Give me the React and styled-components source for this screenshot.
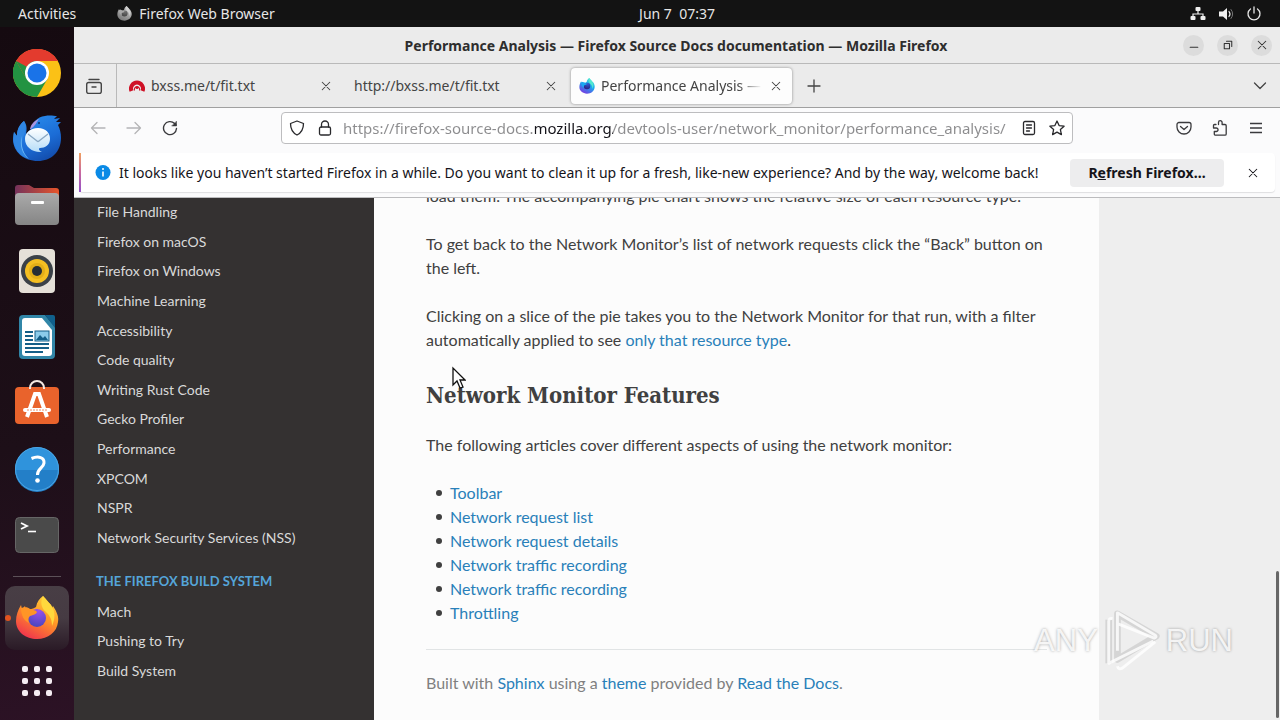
import styled, { createGlobalStyle } from "styled-components";

const GlobalStyle = createGlobalStyle`
  * {
    box-sizing: border-box;
  }

  body {
    margin: 0;
    background: #131313;
    font-family: "Noto Sans", "Open Sans", sans-serif;
    font-size: 14px;
  }

  button {
    padding: 0;
    border: 0;
    background: none;
    color: inherit;
    font: inherit;
  }

  svg {
    display: block;
    flex: none;
  }
`;

const Desktop = styled.div`
  display: flex;
  flex-direction: column;
  height: 100vh;
  overflow: hidden;
  position: relative;
`;

const TopBar = styled.header`
  display: grid;
  grid-template-columns: 1fr auto 1fr;
  align-items: center;
  flex: none;
  height: 27px;
  padding: 0 18px;
  background: #131313;
  color: #e6e6e6;
`;

const TopGroup = styled.div`
  display: flex;
  align-items: center;
  gap: ${({ $gap }) => $gap}px;
  justify-content: ${({ $end }) => ($end ? "flex-end" : "flex-start")};
`;

const Clock = styled.time`
  padding-left: 74px;
`;

const AppMenu = styled.button`
  display: flex;
  align-items: center;
  gap: 7px;
`;

const Workspace = styled.div`
  display: flex;
  flex: 1;
  min-height: 0;
`;

const Dock = styled.nav`
  display: flex;
  flex-direction: column;
  align-items: center;
  flex: none;
  width: 74px;
  padding-top: 13px;
  background: linear-gradient(170deg, #150a10, #1d0f18 60%, #2c1225);
`;

const DockButton = styled.button`
  display: grid;
  place-items: center;
  flex: none;
  width: 64px;
  height: 66px;
`;

const DockDivider = styled.hr`
  width: 48px;
  margin: 8px 0 9px;
  border: 0;
  border-top: 1px solid #5c5158;
`;

const ActiveApp = styled(DockButton)`
  position: relative;
  height: 64px;
  border-radius: 10px;
  background: linear-gradient(#483e45, #463b43 50%, #2a1a26);

  &::before {
    content: "";
    position: absolute;
    left: 0;
    top: 29px;
    width: 6px;
    height: 6px;
    border-radius: 50%;
    background: #e2531f;
  }
`;

const AppsButton = styled(DockButton)`
  height: 62px;
`;

const Window = styled.main`
  display: flex;
  flex-direction: column;
  flex: 1;
  min-width: 0;
  background: #fbfbfc;
`;

const TitleBar = styled.div`
  display: grid;
  grid-template-columns: 89px 1fr 89px;
  align-items: center;
  flex: none;
  height: 37px;
  padding: 0 8px 0 6px;
  border-bottom: 1px solid #b9b9b9;
  background: #ebebeb;
`;

const WindowTitle = styled.h1`
  grid-column: 2;
  margin: 0;
  font-size: 14px;
  font-weight: 700;
  text-align: center;
  white-space: nowrap;
  color: #2e2e2e;
`;

const WindowButtons = styled.div`
  display: flex;
  justify-content: space-between;
`;

const WindowButton = styled.button`
  display: grid;
  place-items: center;
  width: 21px;
  height: 21px;
  border-radius: 50%;
  background: #dcdcdc;
  color: #333;
`;

const TabStrip = styled.div`
  display: flex;
  align-items: center;
  flex: none;
  height: 44px;
  border-bottom: 1px solid #a0a0a0;
  background: #ebebeb;
  color: #444;
`;

const StripButton = styled.button`
  display: grid;
  place-items: center;
  width: 40px;
  height: 43px;
`;

const ViewButton = styled(StripButton)`
  width: 43px;
  margin-right: 2px;
  padding-right: 2px;
  border-right: 1px solid #b9b9b9;
`;

const Tab = styled.div`
  display: flex;
  align-items: center;
  flex: 0 1 221px;
  min-width: 0;
  height: 36px;
  margin: 0 2px;
  padding: 0 10px 0 8px;
  border-radius: 4px;
  background: ${({ $active }) => ($active ? "#fdfdfd" : "transparent")};
  box-shadow: ${({ $active }) => ($active ? "0 0 3px #888" : "none")};
`;

const TabTitle = styled.span`
  flex: 1;
  margin-left: ${({ $icon }) => ($icon ? 6 : 0)}px;
  overflow: hidden;
  white-space: nowrap;
  mask-image: ${({ $fade }) =>
    $fade ? "linear-gradient(to right, #000 85%, transparent)" : "none"};
`;

const TabClose = styled.button`
  display: grid;
  place-items: center;
  width: 12px;
  height: 20px;
  margin-left: 8px;
`;

const Push = styled.div`
  flex: 1;
`;

const NavBar = styled.div`
  display: flex;
  align-items: center;
  flex: none;
  height: 40px;
  padding: 0 6px;
`;

const NavButton = styled.button`
  display: grid;
  place-items: center;
  width: 36px;
  height: 36px;
  color: #3a3a3d;

  &:disabled {
    color: #b4b4b6;
  }
`;

const AddressBar = styled.label`
  display: flex;
  align-items: center;
  flex: 1;
  gap: 12px;
  min-width: 0;
  height: 32px;
  margin: 0 93px;
  padding: 0 7px;
  border: 1px solid #bdbdbf;
  border-radius: 4px;
  background: #fff;
  color: #29292c;
`;

const AddressInput = styled.input`
  flex: 1;
  min-width: 0;
  height: 28px;
  margin-left: -2px;
  padding: 0;
  border: 0;
  outline: 0;
  font: inherit;
  font-size: 15px;
  color: transparent;
  background: linear-gradient(
    to right,
    #8c8c8e 192px,
    #15141a 192px 270px,
    #8c8c8e 270px
  );
  background-clip: text;
`;

const Notice = styled.section`
  display: flex;
  align-items: center;
  flex: none;
  height: 39px;
  margin: 5px;
  padding-right: 16px;
  border-radius: 4px;
  background: #fff;
  box-shadow: 0 1px 1px #dedee0;
  color: #15141a;

  &::before {
    content: "";
    align-self: stretch;
    width: 2px;
    margin-right: 14px;
    background: linear-gradient(#f0a060, #c868a0 50%, #9350c8);
  }
`;

const NoticeText = styled.p`
  flex: 1;
  margin: 0 0 0 8px;
  white-space: nowrap;
`;

const RefreshButton = styled.button`
  width: 154px;
  height: 28px;
  margin-right: 15px;
  border-radius: 4px;
  background: #ededee;
  font-weight: 700;
`;

const Viewport = styled.div`
  display: flex;
  flex: 1;
  min-height: 0;
  overflow: hidden;
  position: relative;
  border-top: 1px solid #bcbcbe;
  background: #eee;
  font-family: Lato, sans-serif;
`;

const SideNav = styled.nav`
  flex: 0 0 300px;
  margin-top: -1px;
  background: #343131;
`;

const SideList = styled.ul`
  display: grid;
  grid-auto-rows: 1fr;
  align-items: center;
  height: ${({ $height }) => $height}px;
  margin: 0;
  padding: 0 23px;
  list-style: none;
`;

const SideLink = styled.a`
  color: #d9d9d9;
  font-size: 14px;
  text-decoration: none;
`;

const SideCaption = styled.h2`
  margin: 0;
  padding: 13px 22px 0;
  color: #55a5d9;
  font-size: 13px;
  line-height: 32px;
  text-transform: uppercase;
`;

const Article = styled.article`
  flex: 0 1 725px;
  padding: 0 52px;
  background: #fcfcfc;
  color: #404040;
  font-size: 16px;
  line-height: 24px;
`;

const Paragraph = styled.p`
  margin: 0 0 24px;
`;

const LeadParagraph = styled(Paragraph)`
  margin-top: -14px;
`;

const Heading = styled.h2`
  margin: 0 0 24px;
  padding-top: 6px;
  font-family: "DejaVu Serif Condensed", "DejaVu Serif", serif;
  font-size: 22px;
  line-height: 27px;
  white-space: nowrap;
`;

const DocLink = styled.a`
  color: #2980b9;
  text-decoration: none;
`;

const BulletList = styled.ul`
  margin: 0 0 24px;
  padding-left: 10px;
  list-style: none;
`;

const BulletItem = styled.li`
  display: flex;
  align-items: center;
  gap: 8px;

  &::before {
    content: "";
    width: 6px;
    height: 6px;
    border-radius: 50%;
    background: #404040;
  }
`;

const Rule = styled.hr`
  margin: 0 0 21px;
  border: 0;
  border-top: 1px solid #e1e4e5;
`;

const Credits = styled.footer`
  color: #808080;
`;

const ScrollThumb = styled.div`
  position: absolute;
  right: 1px;
  bottom: 2px;
  width: 3px;
  height: 147px;
  border-radius: 2px;
  background: #666;
`;

const Pointer = styled.div`
  position: absolute;
  left: 451px;
  top: 366px;
`;

const Watermark = styled.div`
  position: absolute;
  right: 47px;
  bottom: 46px;
  display: flex;
  align-items: center;
  gap: 5px;
  color: rgba(255, 255, 255, 0.85);
  font-family: "Liberation Sans", sans-serif;
  font-size: 31px;
  line-height: 66px;
  text-shadow: 0 0 3px rgba(0, 0, 0, 0.35);
  pointer-events: none;
`;

const Line = ({ size = 16, width = 1.3, children, ...rest }) => (
  <svg
    width={size}
    height={size}
    viewBox="0 0 16 16"
    fill="none"
    stroke="currentColor"
    strokeWidth={width}
    strokeLinecap="round"
    strokeLinejoin="round"
    aria-hidden="true"
    {...rest}
  >
    {children}
  </svg>
);

const CloseIcon = ({ size = 12 }) => (
  <Line size={size} width={1.4}>
    <path d="M3 3l10 10M13 3L3 13" />
  </Line>
);

const ChromeIcon = () => (
  <svg width="48" height="48" viewBox="0 0 48 48">
    <circle cx="24" cy="24" r="24" fill="#fbc116" />
    <path d="M24 24L3.2 12A24 24 0 0 1 44.8 12H24z" fill="#e33b2e" />
    <path d="M3.2 12A24 24 0 0 0 24 48L34.4 30 24 24 13.6 30z" fill="#229342" />
    <path d="M3.2 12L13.6 30 24 24 24 12z" fill="#229342" />
    <path d="M3.2 12A24 24 0 0 1 44.8 12H24a12 12 0 0 0-10.8 7L12 27z" fill="#e33b2e" />
    <path d="M3.2 12L13.6 30 18 20z" fill="#229342" />
    <circle cx="24" cy="24" r="12" fill="#fff" />
    <circle cx="24" cy="24" r="9.5" fill="#1a73e8" />
  </svg>
);

const ThunderbirdIcon = () => (
  <svg width="50" height="50" viewBox="0 0 50 50">
    <defs>
      <linearGradient id="bird" x1="0.2" y1="0" x2="0.7" y2="1">
        <stop offset="0" stopColor="#2b8fee" />
        <stop offset="0.6" stopColor="#1b6cd6" />
        <stop offset="1" stopColor="#134cab" />
      </linearGradient>
      <linearGradient id="letter" x2="0" y2="1">
        <stop offset="0" stopColor="#fff" />
        <stop offset="1" stopColor="#b5dcf8" />
      </linearGradient>
    </defs>
    <path
      d="M19 15c1-6 6-12 14-13 5-1 9 0 12 0l-3 3 6-1-4 4 5 0-3 3c2 4 3 8 3 13 0 14-10 23-23 23C12 47 1 38 1 25l1-7 3 4c0-6 2-11 7-15 3 4 3 8 2 13z"
      fill="url(#bird)"
    />
    <path d="M12 7c-5 4-7 9-7 15l-3-4c-3 13 4 24 15 27C8 37 9 27 12 21c2-5 2-9 0-14z" fill="#2f86e3" />
    <path d="M10 22c-3 9 0 18 7 23-7-7-8-14-7-23z" fill="#6db8f5" />
    <path d="M18 15c1-5 4-8 9-10-3 4-4 7-8 10z" fill="#a995e0" />
    <path
      d="M26 14c8 0 12 5 12 11s-5 9-10 9c-2 0-1 3 2 4-9 1-17-5-17-13 0-6 5-11 13-11z"
      fill="url(#letter)"
    />
    <path d="M16 20l9 7q1 1 2 0l9-7" fill="none" stroke="#8aa7c2" strokeWidth="1.3" />
    <circle cx="27" cy="9" r="1" fill="#0b2f70" />
  </svg>
);

const FilesIcon = () => (
  <svg width="46" height="42" viewBox="0 0 46 42">
    <defs>
      <linearGradient id="folderBack">
        <stop offset="0" stopColor="#74325b" />
        <stop offset="1" stopColor="#e7552b" />
      </linearGradient>
      <linearGradient id="folderFront" x2="0" y2="1">
        <stop offset="0" stopColor="#aaa" />
        <stop offset="1" stopColor="#858585" />
      </linearGradient>
    </defs>
    <path d="M1 4a3 3 0 0 1 3-3h11l5 3h22a3 3 0 0 1 3 3v16H1z" fill="url(#folderBack)" />
    <path
      d="M1 13a4 4 0 0 1 4-4h36a4 4 0 0 1 4 4v24a4 4 0 0 1-4 4H5a4 4 0 0 1-4-4z"
      fill="url(#folderFront)"
    />
    <rect x="17" y="17" width="13" height="3" rx="1" fill="#fff" />
  </svg>
);

const MusicIcon = () => (
  <svg width="38" height="46" viewBox="0 0 38 46">
    <rect x="1" y="1" width="36" height="44" rx="4" fill="#e5e0d8" />
    <circle cx="19" cy="23" r="16" fill="#3b4148" />
    <circle cx="19" cy="23" r="12" fill="#f5bf22" />
    <circle cx="19" cy="23" r="8" fill="#e3ae18" />
    <circle cx="19" cy="23" r="5" fill="#262d35" />
  </svg>
);

const WriterIcon = () => (
  <svg width="38" height="46" viewBox="0 0 38 46">
    <path d="M5 1h22l10 12v28a4 4 0 0 1-4 4H5a4 4 0 0 1-4-4V5a4 4 0 0 1 4-4z" fill="#3186a8" />
    <path d="M27 1h8a2 2 0 0 1 2 2v11z" fill="#10608c" />
    <path d="M7 4h17l10 12v23a3 3 0 0 1-3 3H7a3 3 0 0 1-3-3V7a3 3 0 0 1 3-3z" fill="#fff" />
    <path
      d="M7 18h8M7 22h8M7 26h8M7 30h24M7 34h24M7 38h18"
      stroke="#155f88"
      strokeWidth="1.8"
    />
    <rect x="17" y="17" width="14" height="10" fill="#8ccbea" stroke="#155f88" />
    <path d="M18 26l4-5 3 3 2-2 3 4z" fill="#155f88" />
  </svg>
);

const StoreIcon = () => (
  <svg width="46" height="46" viewBox="0 0 46 46">
    <rect x="1" y="7" width="44" height="37" rx="4" fill="#e9632c" />
    <path d="M16 9V8a7 7 0 0 1 14 0v1" fill="none" stroke="#f4e9e2" strokeWidth="2" />
    <path d="M13 37L21 14h4l8 23" fill="none" stroke="#fff" strokeWidth="4" />
    <rect x="9" y="28" width="28" height="4" rx="2" fill="#fff" />
    <path d="M13 30h20" stroke="#ee8e67" strokeDasharray="2 1" />
  </svg>
);

const HelpIcon = () => (
  <svg width="46" height="46" viewBox="0 0 46 46">
    <circle cx="23" cy="23" r="22" fill="#2f93dc" />
    <path d="M1 24a22 22 0 0 0 44 0z" fill="#237fc8" />
    <circle cx="23" cy="23" r="21.5" fill="none" stroke="#4aa5e4" />
    <path
      d="M17.500 12.500c7-3 13-1 12.500 4.500-.5 5-7 6-6.500 12"
      fill="none"
      stroke="#fff"
      strokeWidth="3"
    />
    <circle cx="23.500" cy="34.500" r="2.300" fill="#fff" />
  </svg>
);

const TerminalIcon = () => (
  <svg width="46" height="38" viewBox="0 0 46 38">
    <rect x="1.5" y="1.5" width="43" height="35" rx="4" fill="#4a4a4a" stroke="#666" />
    <path d="M7 7l6 3-6 3" fill="none" stroke="#fff" strokeWidth="1.8" />
    <path d="M14 15.5h8" stroke="#fff" strokeWidth="1.6" />
  </svg>
);

const FirefoxLogo = ({ size, id, colors, globe }) => (
  <svg width={size} height={size} viewBox="0 0 44 44">
    <defs>
      <linearGradient id={`${id}-body`} x1="0.8" y1="0" x2="0.25" y2="1">
        <stop offset="0" stopColor={colors[0]} />
        <stop offset="0.45" stopColor={colors[1]} />
        <stop offset="1" stopColor={colors[2]} />
      </linearGradient>
      <radialGradient id={`${id}-globe`} cx="0.6" cy="0.1" r="0.9">
        <stop offset="0" stopColor={globe[0]} />
        <stop offset="1" stopColor={globe[1]} />
      </radialGradient>
    </defs>
    <path
      d="M28 0c3 3 5 6 8 9l1 3 1-2c4 6 6 11 5 16-1 10-10 17-21 17S1 36 1 25c0-6 2-11 5-16l1 4 3-3 1 4c4-1 7-1 10-3 1-5 3-8 7-11z"
      fill={`url(#${id}-body)`}
    />
    <circle cx="22" cy="22" r="9" fill={`url(#${id}-globe)`} />
    <path
      d="M6 12c4-1 7-1 9 1 3 1 6 1 7 3-1 3-5 3-7 4-2 2-2 4-1 7-5-2-8-8-8-15z"
      fill={colors[1]}
    />
    <path d="M28 0c3 3 5 6 8 9 5 7 4 14 1 21 0-8-3-11-6-14-5-4-6-10-3-16z" fill={colors[0]} />
  </svg>
);

const GridIcon = () => (
  <svg width="32" height="32" viewBox="0 0 32 32" fill="#f5edf2">
    {[0, 12, 24].map((y) =>
      [0, 12, 24].map((x) => (
        <rect key={`${x}-${y}`} x={x + 1} y={y + 1} width="6" height="6" rx="2" />
      ))
    )}
  </svg>
);

const NetworkIcon = () => (
  <svg width="16" height="16" viewBox="0 0 16 16" fill="#f0f0f0">
    <rect x="5.5" y="1" width="5" height="4" rx="1" />
    <rect x="0.5" y="10" width="5" height="4" rx="1" />
    <rect x="10.5" y="10" width="5" height="4" rx="1" />
    <path d="M8 4v4M3 11V8h10v3" fill="none" stroke="#f0f0f0" strokeWidth="1.2" />
  </svg>
);

const VolumeIcon = () => (
  <svg width="16" height="16" viewBox="0 0 16 16" fill="none" strokeLinecap="round">
    <path d="M1 5.500h4L9 2v12L5 10.500H1z" fill="#f0f0f0" />
    <path d="M11 5.500q2 2.500 0 5" stroke="#f0f0f0" strokeWidth="1.2" />
    <path d="M13 3.500q3.500 4.500 0 9" stroke="#777" />
  </svg>
);

const ShieldIcon = () => (
  <Line>
    <path d="M8 1l6.500 2.500c0 5-1.500 9-6.500 11.500C3 12.500 1.500 8.500 1.500 3.500z" />
  </Line>
);

const LockIcon = () => (
  <Line>
    <rect x="2.500" y="7" width="11" height="8" rx="1.500" />
    <path d="M4.500 7V4.500a3.500 3.500 0 0 1 7 0V7" />
  </Line>
);

const ReaderIcon = () => (
  <Line>
    <rect x="2.500" y="1.500" width="11" height="13" rx="1.500" />
    <path d="M5.500 5h5M5.500 8h5M5.500 11h3" />
  </Line>
);

const StarIcon = () => (
  <Line>
    <path d="M8 1l2.100 4.600 5 .6-3.700 3.400 1 5L8 12.100l-4.400 2.500 1-5L.9 6.200l5-.6z" />
  </Line>
);

const PlayLogo = () => (
  <svg width="58" height="66" viewBox="0 0 58 68" fill="none" strokeLinejoin="round">
    <g stroke="rgba(0,0,0,0.10)" strokeWidth="7">
      <path d="M14 46V6l40 23-40 24z" />
      <path d="M5 57V12" />
    </g>
    <g stroke="rgba(255,255,255,0.8)" strokeWidth="3">
      <path d="M14 44V5l39 23q2 2-1 3L14 16" />
      <path d="M9 11q-4-1-4 3v43l46-23" />
      <path d="M53 35L19 62q-4 2-5-2" />
    </g>
  </svg>
);

const dockApps = [
  { name: "Google Chrome", Icon: ChromeIcon },
  { name: "Thunderbird Mail", Icon: ThunderbirdIcon },
  { name: "Files", Icon: FilesIcon },
  { name: "Rhythmbox", Icon: MusicIcon },
  { name: "LibreOffice Writer", Icon: WriterIcon },
  { name: "Ubuntu Software", Icon: StoreIcon },
  { name: "Help", Icon: HelpIcon },
  { name: "Terminal", Icon: TerminalIcon },
];

const sideLinks = [
  "File Handling",
  "Firefox on macOS",
  "Firefox on Windows",
  "Machine Learning",
  "Accessibility",
  "Code quality",
  "Writing Rust Code",
  "Gecko Profiler",
  "Performance",
  "XPCOM",
  "NSPR",
  "Network Security Services (NSS)",
];

const buildLinks = ["Mach", "Pushing to Try", "Build System"];

const featureLinks = [
  "Toolbar",
  "Network request list",
  "Network request details",
  "Network traffic recording",
  "Network traffic recording",
  "Throttling",
];

const SideMenu = ({ items, height }) => (
  <SideList $height={height}>
    {items.map((item) => (
      <li key={item}>
        <SideLink href="#">{item}</SideLink>
      </li>
    ))}
  </SideList>
);

const App = () => (
  <Desktop>
    <GlobalStyle />
    <TopBar>
      <TopGroup $gap={41}>
        <button>Activities</button>
        <AppMenu>
          <FirefoxLogo
            size={15}
            id="mono"
            colors={["#d0d0d0", "#a8a8a8", "#777"]}
            globe={["#777", "#444"]}
          />
          Firefox Web Browser
        </AppMenu>
      </TopGroup>
      <Clock>Jun 7&nbsp; 07:37</Clock>
      <TopGroup $gap={12} $end>
        <NetworkIcon />
        <VolumeIcon />
        <Line>
          <path d="M8 1v6M4.500 3a6 6 0 1 0 7 0" />
        </Line>
      </TopGroup>
    </TopBar>

    <Workspace>
      <Dock aria-label="Dock">
        {dockApps.map(({ name, Icon }) => (
          <DockButton key={name} aria-label={name}>
            <Icon />
          </DockButton>
        ))}
        <DockDivider />
        <ActiveApp aria-label="Firefox">
          <FirefoxLogo
            size={44}
            id="color"
            colors={["#ffd83d", "#ff9526", "#f0304f"]}
            globe={["#9a50ee", "#4b46bd"]}
          />
        </ActiveApp>
        <AppsButton aria-label="Show applications">
          <GridIcon />
        </AppsButton>
      </Dock>

      <Window>
        <TitleBar>
          <WindowTitle>
            Performance Analysis — Firefox Source Docs documentation — Mozilla Firefox
          </WindowTitle>
          <WindowButtons>
            <WindowButton aria-label="Minimize">
              <Line size={12} width={1.6}>
                <path d="M3 11h10" />
              </Line>
            </WindowButton>
            <WindowButton aria-label="Restore">
              <Line size={12} width={1.4}>
                <path d="M3 6h7v7H3zM6 3h7v7" />
              </Line>
            </WindowButton>
            <WindowButton aria-label="Close">
              <CloseIcon />
            </WindowButton>
          </WindowButtons>
        </TitleBar>

        <TabStrip>
          <ViewButton aria-label="View recent browsing">
            <Line width={1.4}>
              <path d="M3 1.500h10" />
              <rect x="0.700" y="4.500" width="14.600" height="11" rx="2" />
              <path d="M6 9h4" />
            </Line>
          </ViewButton>
          <Tab>
            <svg width="16" height="16" viewBox="0 0 16 16" fill="none">
              <path d="M2.500 13A6 6 0 1 1 13.500 13" stroke="#cf1126" strokeWidth="4" />
              <path d="M5.500 12.500a2.700 2.700 0 1 1 5 0" stroke="#cf1126" strokeWidth="1.200" />
              <circle cx="8" cy="9.500" r="1.500" fill="#cf1126" />
            </svg>
            <TabTitle $icon>bxss.me/t/fit.txt</TabTitle>
            <TabClose aria-label="Close tab">
              <CloseIcon />
            </TabClose>
          </Tab>
          <Tab>
            <TabTitle>http://bxss.me/t/fit.txt</TabTitle>
            <TabClose aria-label="Close tab">
              <CloseIcon />
            </TabClose>
          </Tab>
          <Tab $active>
            <FirefoxLogo
              size={16}
              id="dev"
              colors={["#54e8d0", "#1aa8f0", "#7a35e0"]}
              globe={["#3060d8", "#2a2080"]}
            />
            <TabTitle $icon $fade>
              Performance Analysis — Firefox Source Docs
            </TabTitle>
            <TabClose aria-label="Close tab">
              <CloseIcon />
            </TabClose>
          </Tab>
          <StripButton aria-label="New tab">
            <Line>
              <path d="M8 2v12M2 8h12" />
            </Line>
          </StripButton>
          <Push />
          <StripButton aria-label="List all tabs">
            <Line>
              <path d="M2.500 5l5.500 5.500L13.500 5" />
            </Line>
          </StripButton>
        </TabStrip>

        <NavBar>
          <NavButton disabled aria-label="Back">
            <Line>
              <path d="M15 8H1.500M7 2.500L1.500 8 7 13.500" />
            </Line>
          </NavButton>
          <NavButton disabled aria-label="Forward">
            <Line>
              <path d="M1 8h13.500M9 2.500L14.500 8 9 13.500" />
            </Line>
          </NavButton>
          <NavButton aria-label="Reload">
            <Line width={1.4}>
              <path d="M14.500 8.500A6.500 6.500 0 1 1 12.600 3.500L14 5" />
              <path d="M14.500 1.500V6H10z" fill="currentColor" strokeWidth="0.5" />
            </Line>
          </NavButton>
          <AddressBar>
            <ShieldIcon />
            <LockIcon />
            <AddressInput
              aria-label="Address"
              defaultValue="https://firefox-source-docs.mozilla.org/devtools-user/network_monitor/performance_analysis/"
            />
            <ReaderIcon />
            <StarIcon />
          </AddressBar>
          <NavButton aria-label="Save to Pocket">
            <Line>
              <path d="M3 2.500h10a2 2 0 0 1 2 2V7A7 7 0 0 1 1 7V4.500a2 2 0 0 1 2-2z" />
              <path d="M4.500 6.500L8 9.500l3.500-3" />
            </Line>
          </NavButton>
          <NavButton aria-label="Extensions">
            <Line width={1.3}>
              <path d="M6.500 4.500V2.500a1.800 1.800 0 0 1 3.600 0v2H13a1.200 1.200 0 0 1 1.200 1.200V14a1.200 1.200 0 0 1-1.200 1.200H3.500A1.200 1.200 0 0 1 2.300 14v-2.500h2a1.700 1.700 0 0 0 0-3.500H1.500V5.500a1 1 0 0 1 1-1H4" />
            </Line>
          </NavButton>
          <NavButton aria-label="Menu">
            <Line strokeLinecap="butt">
              <path d="M2 3.500h12M2 8h12M2 12.500h12" />
            </Line>
          </NavButton>
        </NavBar>

        <Notice>
          <svg width="16" height="16" viewBox="0 0 16 16">
            <circle cx="8" cy="7.500" r="7.500" fill="#0a8ae6" />
            <circle cx="8" cy="4" r="1" fill="#fff" />
            <path d="M8 6.500v5" stroke="#fff" strokeWidth="1.600" />
          </svg>
          <NoticeText>
            It looks like you haven’t started Firefox in a while. Do you want to clean it up for a
            fresh, like-new experience? And by the way, welcome back!
          </NoticeText>
          <RefreshButton>
            R<u>e</u>fresh Firefox…
          </RefreshButton>
          <TabClose aria-label="Dismiss">
            <CloseIcon />
          </TabClose>
        </Notice>

        <Viewport>
          <SideNav aria-label="Documentation">
            <SideMenu items={sideLinks} height={355} />
            <SideCaption>The Firefox Build System</SideCaption>
            <SideMenu items={buildLinks} height={88} />
          </SideNav>
          <Article>
            <LeadParagraph>
              load them. The accompanying pie chart shows the relative size of each resource type.
            </LeadParagraph>
            <Paragraph>
              To get back to the Network Monitor’s list of network requests click the “Back” button
              on the left.
            </Paragraph>
            <Paragraph>
              Clicking on a slice of the pie takes you to the Network Monitor for that run, with a
              filter automatically applied to see <DocLink href="#">only that resource type</DocLink>.
            </Paragraph>
            <Heading>Network Monitor Features</Heading>
            <Paragraph>
              The following articles cover different aspects of using the network monitor:
            </Paragraph>
            <BulletList>
              {featureLinks.map((item, i) => (
                <BulletItem key={i}>
                  <DocLink href="#">{item}</DocLink>
                </BulletItem>
              ))}
            </BulletList>
            <Rule />
            <Credits>
              Built with <DocLink href="#">Sphinx</DocLink> using a <DocLink href="#">theme</DocLink>{" "}
              provided by <DocLink href="#">Read the Docs</DocLink>.
            </Credits>
          </Article>
          <ScrollThumb />
        </Viewport>
      </Window>
    </Workspace>

    <Pointer>
      <svg width="15" height="24" viewBox="0 0 15 24">
        <path
          d="M2 2v17l4-4 3 7 3-1-3-7h5z"
          fill="#fff"
          stroke="#111"
          strokeWidth="1.300"
        />
      </svg>
    </Pointer>
    <Watermark>
      <span>ANY</span>
      <PlayLogo />
      <span>RUN</span>
    </Watermark>
  </Desktop>
);

export default App;
